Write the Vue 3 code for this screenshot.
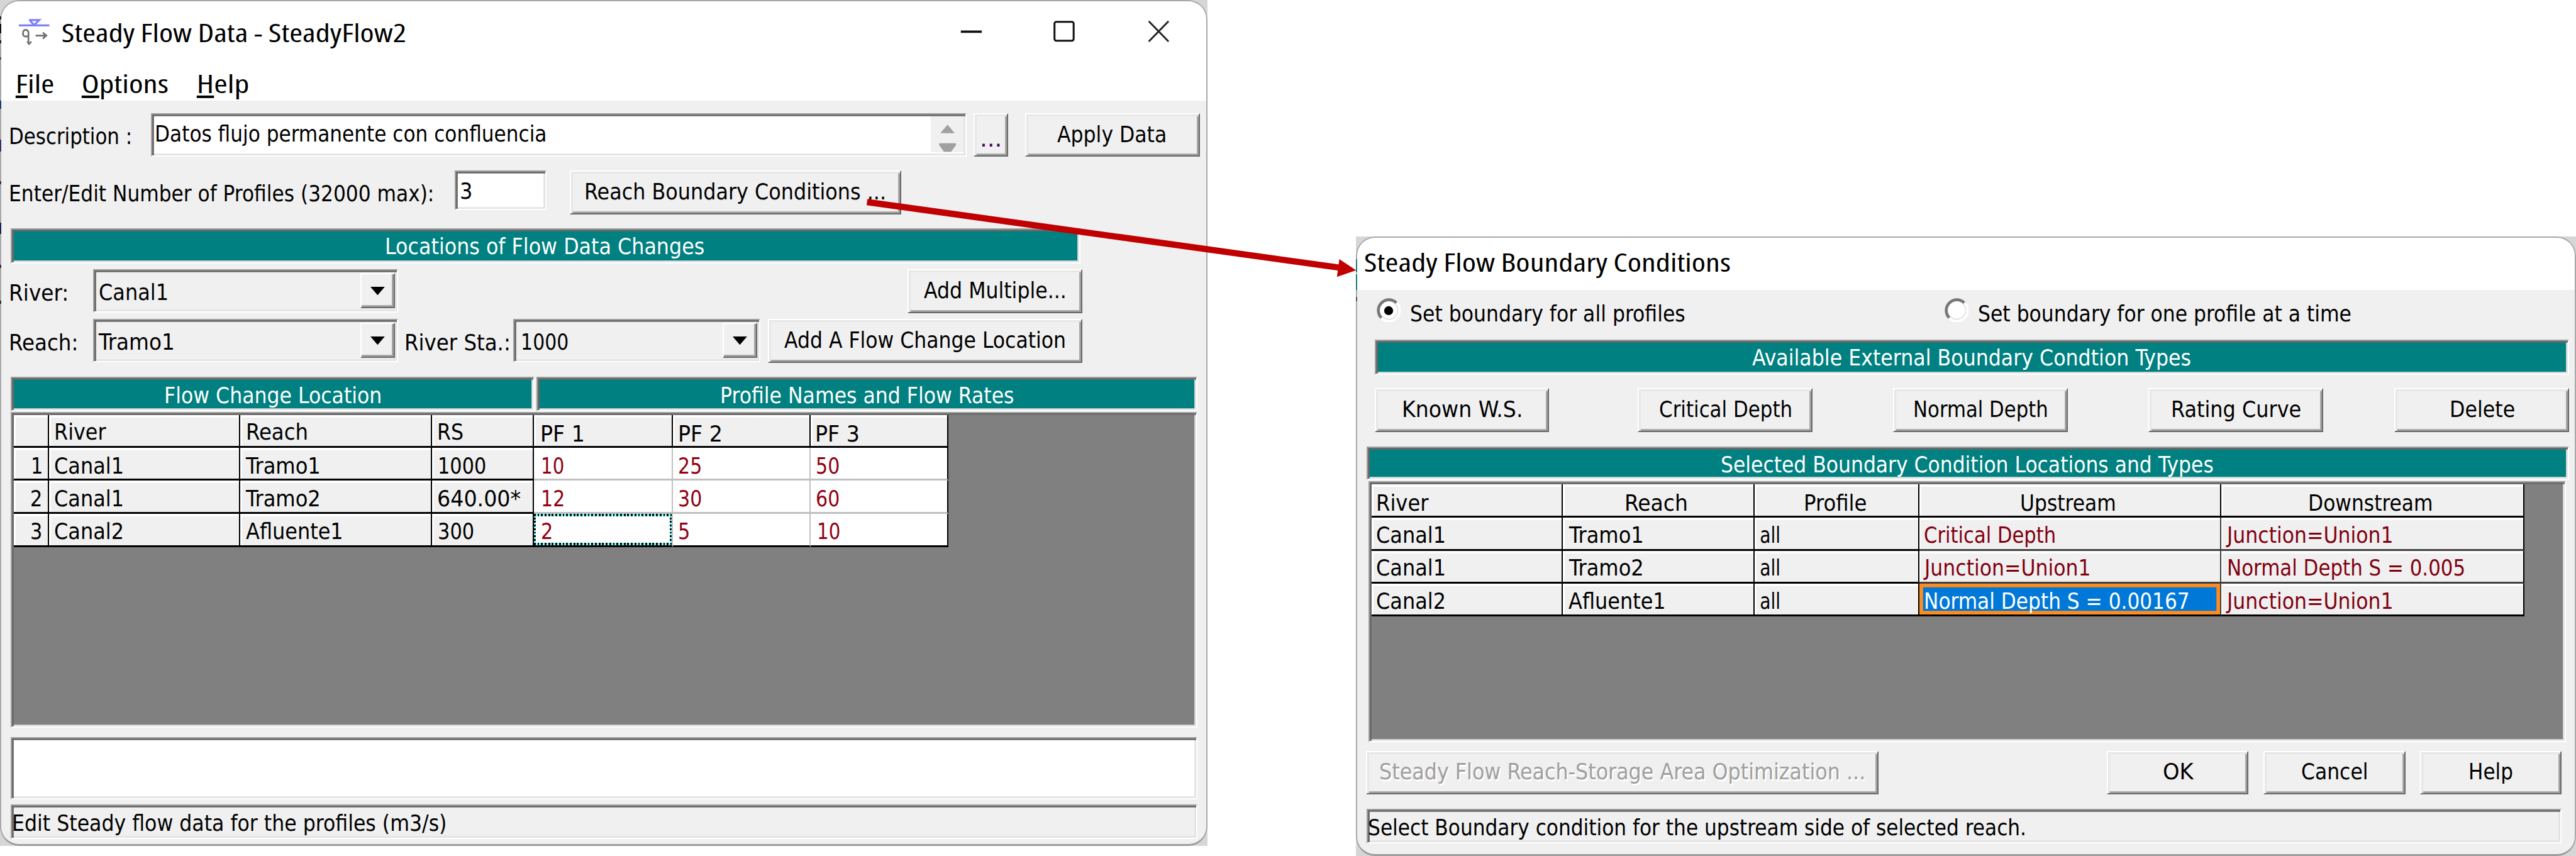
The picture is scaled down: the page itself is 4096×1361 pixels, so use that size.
<script setup>
// Squeezes or stretches a label so that its glyphs cover the given width.
const BEARING = 1.5
const vFit = {
  mounted(el, { value }) {
    const natural = el.offsetWidth
    el.style.width = value + 'px'
    el.style.transform = `scaleX(${value / (natural - BEARING)})`
  }
}

const menus = [
  { key: 'F', rest: 'ile', w: 62, gap: 27 },
  { key: 'O', rest: 'ptions', w: 142, gap: 49 },
  { key: 'H', rest: 'elp', w: 84, gap: 50 }
]

// Cells: [text, indent, width, kind]
const flowCells = [
  ['', 0, 0, 'fixed'], ['River', 9, 84, 'fixed head'], ['Reach', 11, 101, 'fixed head'], ['RS', 9, 42, 'fixed head'],
  ['PF 1', 11, 72, 'fixed low'], ['PF 2', 10, 72, 'fixed low'], ['PF 3', 9, 72, 'fixed low last'],
  ['1', 29, 18, 'fixed'], ['Canal1', 9, 114, 'fixed'], ['Tramo1', 11, 122, 'fixed'], ['1000', 10, 79, 'fixed'],
  ['10', 13, 37, 'flow'], ['25', 10, 38, 'flow'], ['50', 10, 38, 'flow last'],
  ['2', 28, 18, 'fixed'], ['Canal1', 9, 114, 'fixed'], ['Tramo2', 11, 122, 'fixed'], ['640.00*', 9, 137, 'fixed'],
  ['12', 13, 38, 'flow'], ['30', 10, 38, 'flow'], ['60', 10, 38, 'flow last'],
  ['3', 28, 18, 'fixed end'], ['Canal2', 9, 114, 'fixed end'], ['Afluente1', 11, 160, 'fixed end'], ['300', 10, 59, 'fixed end'],
  ['2', 12, 18, 'flow end focus'], ['5', 10, 18, 'flow end'], ['10', 12, 37, 'flow last end']
]

const boundCells = [
  ['River', 9, 85, 'fixed'], ['Reach', 104, 103, 'fixed'], ['Profile', 83, 103, 'fixed'],
  ['Upstream', 169, 158, 'fixed'], ['Downstream', 146, 206, 'fixed last'],
  ['Canal1', 9, 114, 'fixed'], ['Tramo1', 11, 122, 'fixed'], ['all', 9, 32, 'fixed'],
  ['Critical Depth', 9, 218, 'type'], ['Junction=Union1', 11, 276, 'type last'],
  ['Canal1', 9, 114, 'fixed'], ['Tramo2', 11, 122, 'fixed'], ['all', 9, 32, 'fixed'],
  ['Junction=Union1', 10, 276, 'type'], ['Normal Depth S = 0.005', 11, 396, 'type last'],
  ['Canal2', 9, 114, 'fixed'], ['Afluente1', 10, 160, 'fixed'], ['all', 9, 32, 'fixed'],
  ['Normal Depth S = 0.00167', 3, 441, 'chosen'], ['Junction=Union1', 11, 276, 'type last end']
]

const typeButtons = [
  { label: 'Known W.S.', w: 199, gap: 31 },
  { label: 'Critical Depth', w: 220, gap: 148 },
  { label: 'Normal Depth', w: 223, gap: 134 },
  { label: 'Rating Curve', w: 215, gap: 135 },
  { label: 'Delete', w: 107, gap: 119 }
]
</script>

<template>
  <div class="stage">
    <section class="win flow-win">
      <div class="panel">
        <header class="title">
          <svg class="app-icon" width="52" height="48" viewBox="0 0 52 48">
            <g fill="none" stroke="#8080ff" stroke-width="3.4">
              <path d="M0 12H51" />
              <path d="M17 3H34L27 10H24L18 3" />
            </g>
            <g fill="none" stroke="#707070" stroke-width="2.8">
              <path d="M16 29C10 33 6 29 7 24C8 18 14 18 16 23V42" />
              <path d="M14 39L17 43L21 39M28 29H46M40 24L46 29L40 34" />
            </g>
          </svg>
          <span v-fit="573" class="t ui">Steady Flow Data - SteadyFlow2</span>
          <svg class="caption" width="360" height="44" viewBox="0 0 360 44">
            <path d="M5 22.5H40" stroke="#111" stroke-width="4" />
            <rect x="161.5" y="6" width="32" height="31.5" rx="3" fill="none" stroke="#111" stroke-width="3.2" />
            <path d="M319 5L352 39M352 5L319 39" stroke="#222" stroke-width="3" />
          </svg>
        </header>
        <nav class="menu">
          <span v-for="m in menus" :key="m.key" v-fit="m.w" class="t ui" :style="{ marginLeft: m.gap + 'px' }"><u>{{ m.key }}</u>{{ m.rest }}</span>
        </nav>

        <div class="row desc-row">
          <span v-fit="203" class="t label">Description :</span>
          <div class="sunk desc">
            <span v-fit="652" class="t">Datos flujo permanente con confluencia</span>
            <div class="spin">
              <svg width="55" height="60" viewBox="0 0 55 60">
                <path d="M28 14L40 28H16Z M14 45H42V48L34 59H22L14 48Z" fill="#a0a0a0" />
              </svg>
            </div>
          </div>
          <button class="btn dots"><span v-fit="34" class="t">...</span></button>
          <button class="btn apply"><span v-fit="181" class="t">Apply Data</span></button>
        </div>

        <div class="row prof-row">
          <span v-fit="708" class="t label">Enter/Edit Number of Profiles (32000 max):</span>
          <div class="sunk count"><span v-fit="19" class="t">3</span></div>
          <button class="btn reach-btn"><span v-fit="502" class="t">Reach Boundary Conditions ...</span></button>
        </div>

        <div class="sunk banner locations"><span v-fit="531" class="t">Locations of Flow Data Changes</span></div>

        <div class="row river-row">
          <span v-fit="97" class="t label">River:</span>
          <div class="sunk combo river-combo">
            <span v-fit="114" class="t">Canal1</span>
            <i class="drop"><svg width="24" height="14" viewBox="0 0 24 14"><path d="M0 0H24L12 14Z" /></svg></i>
          </div>
          <button class="btn multi"><span v-fit="236" class="t">Add Multiple...</span></button>
        </div>

        <div class="row reach-row">
          <span v-fit="113" class="t label">Reach:</span>
          <div class="sunk combo reach-combo">
            <span v-fit="124" class="t">Tramo1</span>
            <i class="drop"><svg width="24" height="14" viewBox="0 0 24 14"><path d="M0 0H24L12 14Z" /></svg></i>
          </div>
          <span v-fit="175" class="t sta">River Sta.:</span>
          <div class="sunk combo sta-combo">
            <span v-fit="78" class="t">1000</span>
            <i class="drop"><svg width="24" height="14" viewBox="0 0 24 14"><path d="M0 0H24L12 14Z" /></svg></i>
          </div>
          <button class="btn add"><span v-fit="468" class="t">Add A Flow Change Location</span></button>
        </div>

        <div class="row heads">
          <div class="sunk banner head-a"><span v-fit="361" class="t">Flow Change Location</span></div>
          <div class="sunk banner head-b"><span v-fit="489" class="t">Profile Names and Flow Rates</span></div>
        </div>

        <div class="sunk sheet flow-sheet">
          <div class="grid flow-grid">
            <div v-for="(c, i) in flowCells" :key="i" class="cell" :class="c[3]" :style="{ paddingLeft: c[1] + 'px' }">
              <span v-if="c[0]" v-fit="c[2]" class="t">{{ c[0] }}</span>
            </div>
          </div>
        </div>

        <div class="sunk notes"></div>
        <div class="sunk status flow-status"><span v-fit="724" class="t">Edit Steady flow data for the profiles (m3/s)</span></div>
      </div>
    </section>

    <section class="win bound-win">
      <div class="panel">
        <header class="title plain"><span v-fit="610" class="t ui">Steady Flow Boundary Conditions</span></header>

        <div class="row radios">
          <svg class="radio" width="40" height="40" viewBox="0 0 40 40">
            <circle cx="19.5" cy="20" r="16" fill="#fff" />
            <path d="M8 33A17.5 17.5 0 0 1 33 8" fill="none" stroke="#787878" stroke-width="5" />
            <path d="M8 33A17.5 17.5 0 0 0 33 8" fill="none" stroke="#fff" stroke-width="5" />
            <path d="M10 31A14 14 0 0 0 31 10" fill="none" stroke="#e3e3e3" stroke-width="2" />
            <circle cx="20" cy="21" r="7.5" />
          </svg>
          <span v-fit="457" class="t">Set boundary for all profiles</span>
          <svg class="radio second" width="40" height="40" viewBox="0 0 40 40">
            <circle cx="19.5" cy="20" r="16" fill="#fff" />
            <path d="M8 33A17.5 17.5 0 0 1 33 8" fill="none" stroke="#787878" stroke-width="5" />
            <path d="M8 33A17.5 17.5 0 0 0 33 8" fill="none" stroke="#fff" stroke-width="5" />
            <path d="M10 31A14 14 0 0 0 31 10" fill="none" stroke="#e3e3e3" stroke-width="2" />
          </svg>
          <span v-fit="621" class="t">Set boundary for one profile at a time</span>
        </div>

        <div class="sunk banner available"><span v-fit="731" class="t">Available External Boundary Condtion Types</span></div>

        <div class="row types">
          <button v-for="b in typeButtons" :key="b.label" class="btn type-btn" :style="{ marginLeft: b.gap + 'px' }">
            <span v-fit="b.w" class="t">{{ b.label }}</span>
          </button>
        </div>

        <div class="sunk banner selected"><span v-fit="821" class="t">Selected Boundary Condition Locations and Types</span></div>

        <div class="sunk sheet bound-sheet">
          <div class="grid bound-grid">
            <div v-for="(c, i) in boundCells" :key="i" class="cell" :class="c[3]" :style="{ paddingLeft: c[1] + 'px' }">
              <span v-fit="c[2]" class="t">{{ c[0] }}</span>
            </div>
          </div>
        </div>

        <div class="row actions">
          <button class="btn optimize"><span v-fit="810" class="t">Steady Flow Reach-Storage Area Optimization ...</span></button>
          <button class="btn ok"><span v-fit="48" class="t">OK</span></button>
          <button class="btn cancel"><span v-fit="109" class="t">Cancel</span></button>
          <button class="btn help"><span v-fit="72" class="t">Help</span></button>
        </div>

        <div class="sunk status bound-status"><span v-fit="1097" class="t">Select Boundary condition for the upstream side of selected reach.</span></div>
      </div>
    </section>

    <svg class="arrow" width="830" height="150" viewBox="0 0 830 150">
      <path d="M8 17L800 127" stroke="#c00000" stroke-width="10.5" />
      <path d="M797 112.500L825 131L793 142Z" fill="#c00000" />
    </svg>
  </div>
</template>

<style>
body {
  margin: 0;
  background: #fff;
  overflow: hidden;
}
</style>

<style scoped>
.stage {
  position: relative;
  display: flex;
  align-items: flex-start;
  width: 4303px;
  height: 1429.8px;
  overflow: hidden;
  zoom: 0.951894;
  background: #fff;
  color: #000;
  font-family: "DejaVu Sans Condensed", "DejaVu Sans", sans-serif;
  font-stretch: condensed;
  font-size: 36.5px;
  line-height: 44px;
}
.stage * { box-sizing: border-box; }

.win {
  position: relative;
  flex: none;
  background: #d6d6d6;
}
.flow-win { width: 2017px; height: 1413px; }
.bound-win { width: 2038px; height: 1035px; margin: 395px 0 0 248px; }
.panel {
  display: flex;
  flex-direction: column;
  align-items: flex-start;
  width: 100%;
  height: 100%;
  border-radius: 32px;
  overflow: hidden;
  background: #f0f0f0;
}
/* window edge, with bits of the desktop showing along it */
.win::before {
  content: "";
  position: absolute;
  inset: 0;
  z-index: 1;
  border: 3px solid #a8a8a8;
  border-bottom: 4px solid #9c9c9c;
  border-radius: 32px;
}
.win::after {
  content: "";
  position: absolute;
  z-index: 2;
  left: 0;
  width: 2px;
}
.flow-win::after {
  top: 27px;
  height: 480px;
  background: linear-gradient(#222 5px, #a8a8a8 5px 13px, #111 13px 28px, #a8a8a8 28px 40px, #222 40px 45px, #a8a8a8 45px 68px, #555 68px 73px, #a8a8a8 73px 141px, #213a70 141px 154px, #a8a8a8 154px 206px, #336 206px 226px, #a8a8a8 226px 275px, #533 275px 280px, #a8a8a8 280px 345px, #225 345px 363px, #a8a8a8 363px 415px, #333 415px 420px, #a8a8a8 420px 475px, #333 475px);
}
.bound-win::after {
  top: 38px;
  height: 70px;
  background: linear-gradient(#666 5px, #187878 5px 22px, #ccc 22px 25px, #187878 25px 51px, #a8a8a8 51px 63px, #555 63px);
}

.t {
  display: inline-block;
  flex: none;
  height: 44px;
  white-space: nowrap;
  text-align: left;
  text-indent: -1px;
  transform-origin: 0 0;
  translate: 0 2px;
}
.btn .t, .banner .t { translate: none; }
.ui {
  height: 60px;
  font-family: "Open Sans", "Noto Sans", sans-serif;
  font-size: 42px;
  line-height: 60px;
}
.ui u {
  text-decoration-thickness: 4px;
  text-underline-offset: 4px;
  text-decoration-skip-ink: none;
}

.title {
  display: flex;
  flex: none;
  width: 100%;
  height: 88px;
  padding: 23px 57px 0 32px;
  background: #fff;
}
.title.plain { height: 89px; padding: 11px 0 0 15px; }
.app-icon { margin: 7px 20px 0 0; }
.caption { margin: 7px 0 0 auto; }
.title:not(.plain) .ui { margin-top: -1px; }
.menu {
  display: flex;
  flex: none;
  width: 100%;
  height: 80px;
  padding-top: 19px;
  background: #fff;
}

.row { display: flex; flex: none; align-items: flex-start; }
.label { margin: 16px 0 0 16px; }

.btn {
  display: flex;
  flex: none;
  align-items: center;
  justify-content: center;
  height: 73px;
  margin: 0;
  padding: 0;
  border: 3px solid;
  border-color: #fff #696969 #696969 #fff;
  background: #f0f0f0;
  box-shadow: inset 3px 3px #e6e6e6, inset -3px -3px #a0a0a0;
  color: #000;
  font: inherit;
}
.sunk {
  flex: none;
  border: 3px solid;
  border-color: #a0a0a0 #fff #fff #a0a0a0;
  box-shadow: inset 3px 3px #696969, inset -3px -3px #e3e3e3;
}
.banner {
  display: flex;
  align-items: center;
  justify-content: center;
  background: #008080;
  color: #fff;
}

.desc-row { margin-top: 21px; height: 73px; }
.desc {
  display: flex;
  width: 1363px;
  height: 73px;
  margin-left: 33px;
  padding: 10px 3px 0 5px;
  background: #fff;
}
.spin { width: 55px; height: 60px; margin: -7px 0 0 auto; background: #f0f0f0; }
.spin svg { display: block; }
.dots { width: 58px; margin-left: 11px; padding-top: 15px; color: #400060; }
.apply { width: 292px; margin-left: 28px; }

.prof-row { margin-top: 23px; height: 73px; }
.count { width: 153px; height: 66px; margin-left: 36px; padding: 9px 0 0 7px; background: #fff; }
.reach-btn { width: 553px; margin-left: 39px; }

.locations { width: 1787px; height: 59px; margin: 23px 0 0 18px; padding: 5px 5px 0 0; }

.river-row { margin-top: 10px; height: 73px; }
.river-row .label { margin-top: 17px; }
.reach-row { margin-top: 10px; height: 73px; }
.combo {
  display: flex;
  height: 72px;
  padding: 13px 6px 0 9px;
  background: #f0f0f0;
}
.drop {
  display: flex;
  align-items: center;
  justify-content: center;
  width: 58px;
  height: 59px;
  margin: -9px -3px 0 auto;
  border: 3px solid;
  border-color: #fff #696969 #696969 #fff;
  box-shadow: inset -3px -3px #a0a0a0;
}
.river-combo { width: 510px; margin-left: 42px; }
.reach-combo { width: 510px; margin-left: 26px; }
.multi { width: 292px; margin-left: 851px; }
.sta { margin: 16px 0 0 12px; }
.sta-combo { width: 413px; margin-left: 5px; padding-left: 12px; }
.add { width: 525px; margin-left: 13px; }

.heads { margin: 23px 0 0 18px; }
.heads .banner { height: 58px; padding-top: 7px; }
.head-a { width: 875px; }
.head-b { width: 1104px; margin-left: 3px; }

.sheet { background: #808080; padding: 3px; }
.flow-sheet { width: 1982px; height: 528px; margin: 1px 0 0 18px; }
.grid { display: grid; }
.flow-grid {
  width: 1561px;
  grid-template-columns: 59px 319px 321px 170px 232px 230px 230px;
  grid-template-rows: 55px 55px 55px 56px;
}
.cell {
  display: flex;
  align-items: flex-start;
  padding-top: 7px;
  border-right: 3px solid #000;
  border-bottom: 4px solid #000;
  background: #f0f0f0;
}
.fixed { box-shadow: inset 3px 4px #fff; }
.head { padding-top: 6px; }
.low { padding-top: 9px; }
.flow {
  border-color: #c0c0c0;
  background: #fff;
  color: #900010;
}
.last { border-right-color: #000; }
.end { border-bottom-color: #000; }
/* one-pixel marching dots, drawn along the four sides of the focused cell */
.focus {
  background:
    repeating-linear-gradient(90deg, #000 0 3px, #7ff 3px 6px) top / 100% 4px no-repeat,
    repeating-linear-gradient(90deg, #000 0 3px, #7ff 3px 6px) bottom / 100% 4px no-repeat,
    repeating-linear-gradient(#000 0 3px, #7ff 3px 6px) left / 3px 100% no-repeat,
    repeating-linear-gradient(#000 0 3px, #7ff 3px 6px) right / 3px 100% no-repeat,
    #fff;
  background-origin: padding-box;
}

.notes { width: 1982px; height: 104px; margin: 15px 0 0 18px; background: #fff; }
.status { display: flex; height: 58px; padding: 6px 0 0 1px; background: #f0f0f0; }
.flow-status { width: 1982px; margin: 9px 0 0 18px; }

.radios { height: 83px; padding: 17px 0 0 35px; }
.radio { margin: -3px 16px 0 0; }
.second { margin-left: 435px; margin-right: 17px; }
.available { width: 1995px; height: 59px; margin-left: 31px; padding-top: 4px; }
.types { margin-top: 22px; }
.type-btn { width: 292px; height: 74px; }
.selected { width: 2008px; height: 56px; margin: 24px 0 0 18px; padding: 7px 3px 0 0; }
.bound-sheet { width: 2000px; height: 436px; margin: 2px 0 0 21px; }
.bound-grid {
  width: 1926px;
  grid-template-columns: 320px 320px 275px 504px 507px;
  grid-template-rows: 56px 55px 55px 55px;
}
.bound-grid .cell { padding-top: 6px; }
.bound-grid .cell:nth-child(-n + 5) { padding-top: 8px; }
.type {
  border-color: #404040;
  box-shadow: inset 2px 4px #fff;
  color: #800010;
}
.type.last { border-right-color: #000; }
.type.end { border-bottom-color: #000; }
.bound-grid .chosen {
  padding-top: 0;
  border-right-color: #404040;
  border-bottom-color: #000;
  background: #0078d7;
  box-shadow: inset 0 0 0 6px #ff8c20;
  color: #fff;
}
.bound-grid .chosen .t { margin: 6px 0 0 6px; }

.actions { margin-top: 14px; }
.optimize { width: 856px; margin-left: 17px; color: #a0a0a0; text-shadow: 2px 3px #fff; }
.ok { width: 237px; margin-left: 381px; }
.cancel { width: 237px; margin-left: 25px; }
.help { width: 237px; margin-left: 24px; }
.bound-status { width: 1996px; margin: 24px 0 0 18px; }

.arrow {
  position: absolute;
  z-index: 3;
  left: 1440px;
  top: 320px;
}
</style>
